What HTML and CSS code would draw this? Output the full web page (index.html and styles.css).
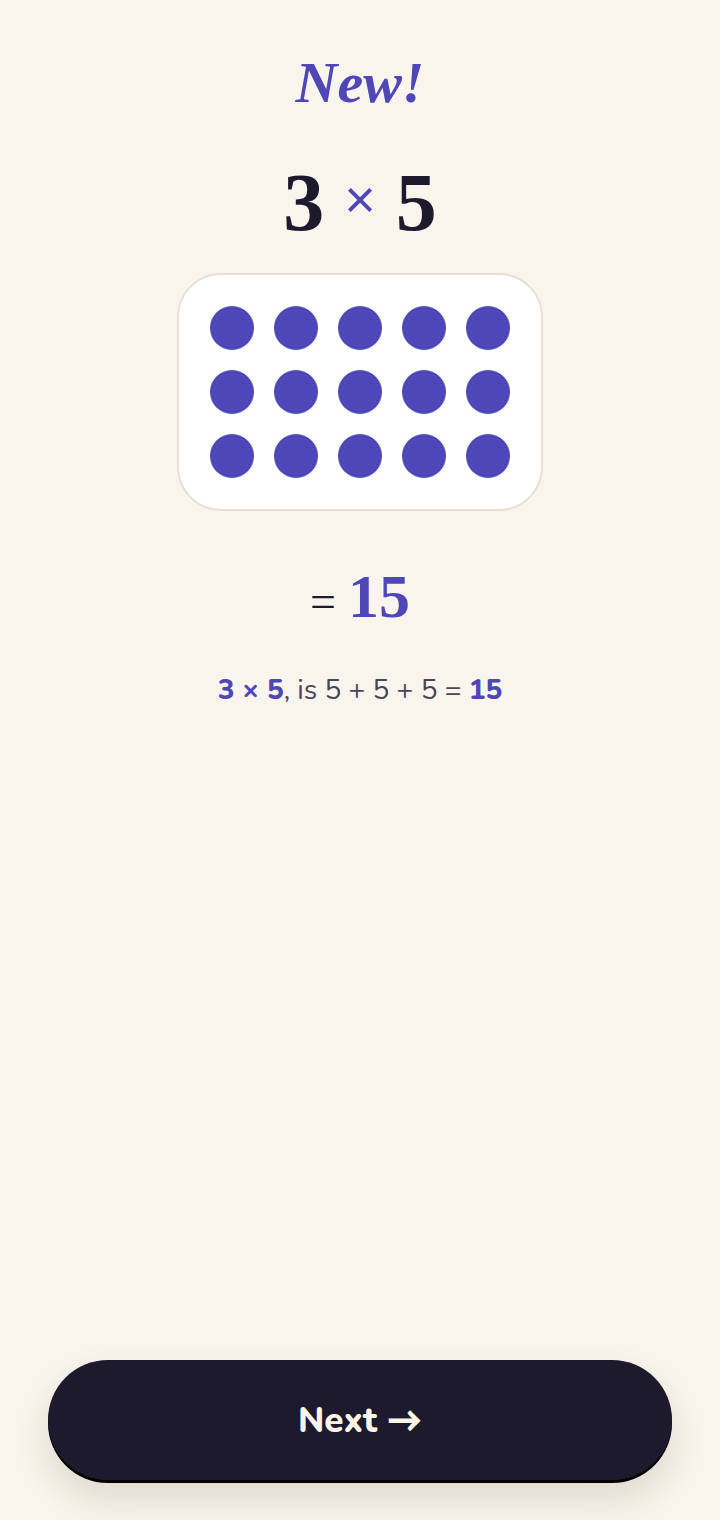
FILE: index.html
```html
<!DOCTYPE html>
<html lang="en">
<head>
<meta charset="utf-8">
<title>New! 3 × 5</title>
<link rel="stylesheet" href="styles.css">
</head>
<body>
<main class="screen">
  <section class="content">
    <h1 class="badge">New!</h1>
    <div class="problem">
      <span class="num">3</span>
      <span class="op">×</span>
      <span class="num">5</span>
    </div>
    <div class="card">
      <div class="grid">
        <span class="dot"></span><span class="dot"></span><span class="dot"></span><span class="dot"></span><span class="dot"></span>
        <span class="dot"></span><span class="dot"></span><span class="dot"></span><span class="dot"></span><span class="dot"></span>
        <span class="dot"></span><span class="dot"></span><span class="dot"></span><span class="dot"></span><span class="dot"></span>
      </div>
    </div>
    <div class="answer">
      <span class="eq">=</span>
      <span class="result">15</span>
    </div>
    <p class="explain"><strong>3 × 5</strong>, is 5 + 5 + 5 = <strong>15</strong></p>
  </section>
  <footer class="actions">
    <button class="next" type="button">Next →</button>
  </footer>
</main>
</body>
</html>
```

FILE: styles.css
```css
* { box-sizing: border-box; }

html, body {
  margin: 0;
  padding: 0;
  background: #f9f5ec;
}

body {
  font-family: "Nunito", "Lato", "Noto Sans", sans-serif;
  color: #1e1a2e;
}

.screen {
  min-height: 100vh;
  display: flex;
  flex-direction: column;
  align-items: center;
  padding: 0 48px 40px;
}

.content {
  display: flex;
  flex-direction: column;
  align-items: center;
  width: 100%;
}

.badge {
  margin: 45px 0 0;
  font-family: "Liberation Serif", "Times New Roman", serif;
  font-style: italic;
  font-weight: 700;
  font-size: 58px;
  line-height: 76px;
  color: #4f46b8;
}

.problem {
  margin-top: 32px;
  display: flex;
  align-items: center;
  gap: 20px;
  height: 100px;
}

.num {
  font-family: "Liberation Serif", "Times New Roman", serif;
  font-weight: 700;
  font-size: 82px;
  line-height: 100px;
  color: #1e1a2e;
}

.op {
  font-family: "Liberation Sans", sans-serif;
  font-size: 54px;
  line-height: 100px;
  color: #4f46b8;
  font-weight: 400;
  position: relative;
  top: -4px;
}

.card {
  margin-top: 20px;
  background: #ffffff;
  border: 2px solid #e8dfd0;
  border-radius: 44px;
  padding: 31px;
}

.grid {
  display: grid;
  grid-template-columns: repeat(5, 44px);
  grid-auto-rows: 44px;
  gap: 20px;
}

.dot {
  display: block;
  width: 44px;
  height: 44px;
  border-radius: 50%;
  background: #4f46b8;
}

.answer {
  margin-top: 47px;
  display: flex;
  align-items: baseline;
  gap: 12px;
  font-family: "Liberation Serif", "Times New Roman", serif;
  line-height: 76px;
}

.eq {
  font-size: 46px;
  color: #1e1a2e;
}

.result {
  font-size: 62px;
  font-weight: 700;
  color: #4f46b8;
}

.explain {
  margin: 33px 0 0;
  font-size: 28px;
  line-height: 34px;
  color: #4a4556;
}

.explain strong {
  color: #4f46b8;
  font-weight: 800;
}

.actions {
  margin-top: auto;
  width: 100%;
}

.next {
  display: block;
  width: 100%;
  height: 120px;
  border: none;
  border-radius: 60px;
  background: #1e1a2e;
  color: #fdf6e6;
  font-family: "Nunito", "Lato", "Noto Sans", sans-serif;
  font-weight: 800;
  font-size: 35px;
  box-shadow: 0 3px 0 #000000, 0 18px 36px rgba(60, 45, 20, 0.14);
  cursor: pointer;
}
```
